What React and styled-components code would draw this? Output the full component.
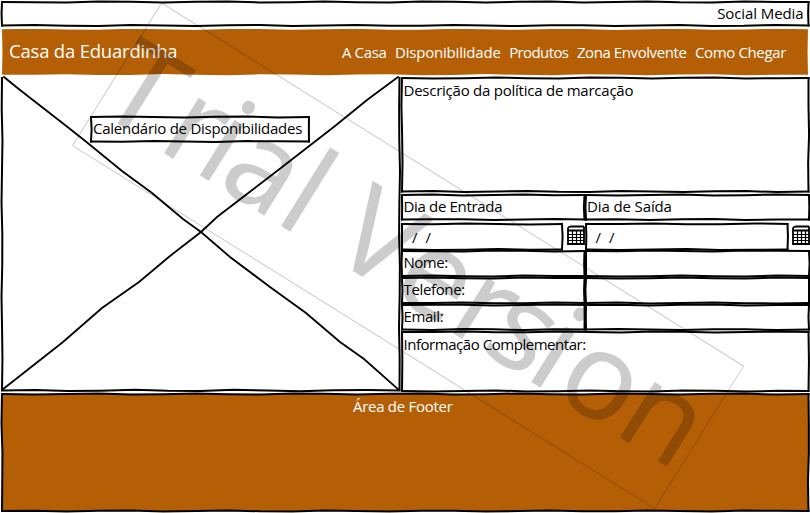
import React from "react";
import styled, { createGlobalStyle, css } from "styled-components";

const GlobalStyle = createGlobalStyle`
  * { box-sizing: border-box; }
  body { margin: 0; background: #fff; overflow: hidden; }
`;

const INK = "#000";
const RUST = "#b45f06";

/* ---------- hand-drawn strokes ---------- */

function wobble(x1, y1, x2, y2, seed, amp = 0.6) {
  const len = Math.hypot(x2 - x1, y2 - y1);
  const steps = Math.max(2, Math.round(len / 32));
  const nx = -(y2 - y1) / len;
  const ny = (x2 - x1) / len;
  const points = [];
  for (let i = 0; i <= steps; i++) {
    const t = i / steps;
    const off = i === 0 || i === steps ? 0 : Math.sin(i * 1.9 + seed * 2.3) * amp;
    points.push(`${(x1 + (x2 - x1) * t + nx * off).toFixed(2)},${(y1 + (y2 - y1) * t + ny * off).toFixed(2)}`);
  }
  return `M${points.join(" L")}`;
}

const FrameSvg = styled.svg`
  position: absolute;
  inset: 0;
  overflow: visible;
  pointer-events: none;
  fill: none;
  stroke: ${(p) => p.$ink || INK};
  stroke-width: 2;
  stroke-linecap: square;
`;

function Frame({ w, h, seed = 1, ink, inset = 0 }) {
  return (
    <FrameSvg width={w} height={h} $ink={ink} aria-hidden="true">
      <path d={wobble(0, inset, w, inset, seed)} />
      <path d={wobble(w, 0, w, h, seed + 1)} />
      <path d={wobble(0, h - inset, w, h - inset, seed + 2)} />
      <path d={wobble(0, 0, 0, h, seed + 3)} />
    </FrameSvg>
  );
}

/* ---------- layout ---------- */

const Page = styled.div`
  position: relative;
  width: 810px;
  height: 513px;
  padding: 2px 1.5px 2px 2px;
  overflow: hidden;
  display: flex;
  flex-direction: column;
  background: #fff;
  color: #000;
  font: 15px/20px "Open Sans", "Noto Sans", sans-serif;
  white-space: pre;
`;

const TopBar = styled.header`
  position: relative;
  height: 24px;
  padding: 1px 5px 0 0;
  text-align: right;
`;

const NavBar = styled.nav`
  position: relative;
  height: 48px;
  margin: 2px -0.5px 0 -1px;
  padding: 0 23px 0 8px;
  display: flex;
  align-items: center;
  justify-content: space-between;
  background: ${RUST};
  color: #fff;
`;

const Brand = styled.span`
  font-size: 18.5px;
  line-height: 24px;
  letter-spacing: -0.2px;
  margin-top: -2px;
`;

const Links = styled.div`
  display: flex;
  gap: 8.5px;
`;

const Main = styled.main`
  display: grid;
  grid-template-columns: 397.5px 406.5px;
  column-gap: 2.5px;
  height: 314px;
  margin-top: 1px;
`;

const ImageBox = styled.section`
  position: relative;
  height: 313.5px;
`;

const CalendarLabel = styled.div`
  position: absolute;
  left: 89px;
  top: 40px;
  width: 218px;
  height: 24.5px;
  padding: 1px 0 0 2px;
  background: #fff;
`;

const Form = styled.section`
  display: flex;
  flex-direction: column;
  padding-top: 1px;
`;

const Row = styled.div`
  display: grid;
  grid-template-columns: 182.5px 223px;
  column-gap: 1px;
  margin-top: ${(p) => p.$gap}px;
`;

const Cell = styled.div`
  position: relative;
  height: ${(p) => p.$h}px;
  padding: ${(p) => p.$pad ?? 1}px 0 0 1.5px;
  ${(p) => p.$gap && css`margin-top: ${p.$gap}px;`}
`;

const DateField = styled.div`
  display: grid;
  grid-template-columns: 1fr 18px;
  column-gap: 5px;
  margin-right: ${(p) => p.$overhang}px;
`;

const DateInput = styled.div`
  position: relative;
  height: 25.5px;
  padding: 3px 0 0 10px;
  word-spacing: 4px;
`;

const CalIcon = styled.svg`
  display: block;
  margin: 1px 0 0 -1px;
  fill: none;
  stroke: #000;
`;

const Footer = styled.footer`
  position: relative;
  height: 117px;
  margin-top: 3px;
  padding: 2px 5px 0 0;
  background: ${RUST};
  color: #fff;
  text-align: center;
`;

const Text = styled.span`
  letter-spacing: ${(p) => p.$ls ?? -0.4}px;
`;

const Watermark = styled.svg`
  position: absolute;
  inset: 0;
  pointer-events: none;
  text {
    font-family: "Noto Sans", sans-serif;
    font-size: 122px;
  }
`;

/* ---------- parts ---------- */

function CalendarIcon() {
  return (
    <CalIcon width="18" height="21" viewBox="0 0 18 21" aria-hidden="true">
      <path d="M1 2.5 L4 1.5 L17 1.5 M1 2.5 V19 H17 V1.5 M1 5.5 H17" strokeWidth="1.8" />
      <path d="M1 9.5H17M1 12.5H17M1 15.5H17M5.5 6V19M9.5 6V19M13.5 6V19" strokeWidth="1.2" />
    </CalIcon>
  );
}

function FormRow({ label, gap, h = 25, seed, second, ls, secondLs }) {
  return (
    <Row $gap={gap}>
      <Cell $h={h}>
        <Frame w={182.5} h={h} seed={seed} />
        <Text $ls={ls}>{label}</Text>
      </Cell>
      <Cell $h={h}>
        <Frame w={223} h={h} seed={seed + 1} />
        {second && <Text $ls={secondLs}>{second}</Text>}
      </Cell>
    </Row>
  );
}

export default function App() {
  return (
    <>
      <GlobalStyle />
      <Page>
        <TopBar>
          <Frame w={806.5} h={23.5} seed={2} />
          <Text $ls={-0.1}>Social Media</Text>
        </TopBar>
        <NavBar>
          <Frame w={808} h={48} seed={4} ink="#fff" inset={0.3} />
          <Brand>Casa da Eduardinha</Brand>
          <Links>
            <Text $ls={-0.35}>A Casa</Text>
            <Text $ls={-0.2}>Disponibilidade</Text>
            <Text $ls={-0.6}>Produtos</Text>
            <Text $ls={-0.42}>Zona Envolvente</Text>
            <Text $ls={-0.35}>Como Chegar</Text>
          </Links>
        </NavBar>
        <Main>
          <ImageBox>
            <FrameSvg width="397.5" height="313.5" aria-hidden="true">
              <path d={wobble(0, 1, 0, 313, 3, 0.5)} />
              <path d={wobble(397.5, 1, 397.5, 313, 5, 0.5)} />
              <path d={wobble(0, 313.5, 397.5, 313.5, 7, 0.7)} />
              <path
                strokeWidth="1.8"
                d="M2 0 L18 13 L63 48 L82 63 L120 94 L150 116 L181 142 L199 155 L228 180 L268 210 L304 236 L338 265 L362 282 L397 313"
              />
              <path
                strokeWidth="1.8"
                d="M396 0 L365 23 L333 49 L275 94 L245 117 L215 140 L199 155 L168 179 L137 205 L100 231 L61 265 L0 313"
              />
            </FrameSvg>
            <CalendarLabel>
              <Frame w={218} h={24.5} seed={1} />
              <Text $ls={-0.26}>Calendário de Disponibilidades</Text>
            </CalendarLabel>
          </ImageBox>
          <Form>
            <Cell $h={113.5} $pad={2}>
              <Frame w={406.5} h={113.5} seed={5} />
              <Text $ls={-0.24}>Descrição da política de marcação</Text>
            </Cell>
            <FormRow label="Dia de Entrada" second="Dia de Saída" gap={3.5} h={24.5} seed={7} ls={-0.33} secondLs={-0.12} />
            <Row $gap={4}>
              <DateField $overhang={-1}>
                <DateInput>
                  <Frame w={160} h={25.5} seed={3} />
                  / /
                </DateInput>
                <CalendarIcon />
              </DateField>
              <DateField $overhang={-2.5}>
                <DateInput>
                  <Frame w={201.5} h={25.5} seed={6} />
                  / /
                </DateInput>
                <CalendarIcon />
              </DateField>
            </Row>
            <FormRow label="Nome:" gap={2} seed={2} ls={-0.5} />
            <FormRow label="Telefone:" gap={2} seed={4} ls={-0.35} />
            <FormRow label="Email:" gap={2} h={24.5} seed={9} ls={-0.4} />
            <Cell $h={59} $gap={2.5} $pad={2}>
              <Frame w={406.5} h={59} seed={6} />
              <Text $ls={-0.46}>Informação Complementar:</Text>
            </Cell>
          </Form>
        </Main>
        <Footer>
          <Frame w={806.5} h={117} seed={8} />
          <Text $ls={-0.28}>Área de Footer</Text>
        </Footer>
        <Watermark width="810" height="513">
          <g transform="translate(161.5 3) rotate(31.95)">
            <rect width="686" height="168" fill="none" stroke="#000" strokeOpacity="0.2" />
            <text x="-2 71.3 113.3 141.2 209 241 273 345 411.7 452 504 537 608.5" y="126" fill="#000" fillOpacity="0.2">
              Trial Version
            </text>
          </g>
        </Watermark>
      </Page>
    </>
  );
}
